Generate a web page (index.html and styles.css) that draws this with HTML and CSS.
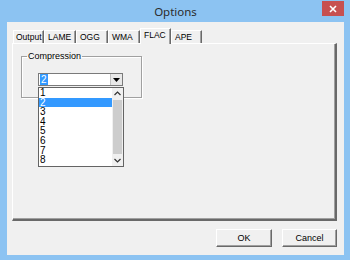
FILE: index.html
```html
<!DOCTYPE html>
<html lang="en">
<head>
  <meta charset="UTF-8" />
  <title>Options</title>
  <link rel="stylesheet" href="styles.css">
</head>
<body>
  <div class="window">
    <div class="titlebar">
      <span></span>
      <span class="title">Options</span>
      <span class="close-btn">
        <svg width="8" height="8" viewBox="0 0 8 8"><path d="M1 1 L7 7 M7 1 L1 7" stroke="#fff" stroke-width="1.6"/></svg>
      </span>
    </div>

    <div class="client">
      <div class="tabs">
        <div class="tab">Output</div>
        <div class="tab">LAME</div>
        <div class="tab">OGG</div>
        <div class="tab">WMA</div>
        <div class="tab active">FLAC</div>
        <div class="tab">APE</div>
      </div>

      <div class="tab-page">
        <fieldset class="group">
          <legend>Compression</legend>
          <div class="combo">
            <div class="combo-field"><span class="sel-text">2</span></div>
            <div class="combo-btn">
              <svg width="7" height="4" viewBox="0 0 7 4"><path d="M0 0 H7 L3.5 4 Z" fill="#000"/></svg>
            </div>

            <div class="droplist">
              <ul class="items">
                <li>1</li>
                <li class="selected">2</li>
                <li>3</li>
                <li>4</li>
                <li>5</li>
                <li>6</li>
                <li>7</li>
                <li>8</li>
              </ul>
              <div class="scrollbar">
                <svg class="arrow" width="7" height="5" viewBox="0 0 7 5"><path d="M0.5 4 L3.5 1 L6.5 4" fill="none" stroke="#333" stroke-width="1.2"/></svg>
                <div class="thumb"></div>
                <svg class="arrow" width="7" height="5" viewBox="0 0 7 5"><path d="M0.5 1 L3.5 4 L6.5 1" fill="none" stroke="#333" stroke-width="1.2"/></svg>
              </div>
            </div>
          </div>
        </fieldset>
      </div>

      <div class="buttons">
        <button class="btn ok-btn">OK</button>
        <button class="btn">Cancel</button>
      </div>
    </div>
  </div>
</body>
</html>
```

FILE: styles.css
```css
body {
  margin: 0;
  padding: 0;
  font-family: "Liberation Sans", Arial, sans-serif;
  font-size: 9px;
  color: #000;
}

.window {
  width: 350px;
  height: 260px;
  box-sizing: border-box;
  background: #8cc3f2;
  padding: 0 6px 5px 7px;
  display: flex;
  flex-direction: column;
}

.titlebar {
  height: 22px;
  display: grid;
  grid-template-columns: 1fr auto 1fr;
  align-items: start;
}

.title {
  font-family: "Noto Sans", sans-serif;
  font-size: 11.5px;
  color: #2b2b2b;
  line-height: 22px;
  margin-top: 1px;
}

.close-btn {
  justify-self: end;
  width: 22px;
  height: 15px;
  margin-top: 1px;
  background: #c75050;
  display: flex;
  align-items: center;
  justify-content: center;
}

.client {
  flex: 1;
  background: #f0f0f0;
  padding: 6px 7px 8px 5px;
  display: flex;
  flex-direction: column;
}

.tabs {
  display: flex;
  align-items: flex-end;
  height: 15px;
  padding-left: 1px;
  position: relative;
  z-index: 1;
}

.tab {
  height: 13px;
  line-height: 13px;
  box-sizing: border-box;
  padding: 0 0 0 3px;
  white-space: nowrap;
  font-size: 8.5px;
  border-top: 1px solid #fff;
  border-left: 1px solid #fff;
  border-right: 1px solid #696969;
  box-shadow: inset -1px 0 #a0a0a0;
}

.tab:nth-child(1) { width: 31px; padding-left: 2px; }
.tab:nth-child(2) { width: 32px; }
.tab:nth-child(3) { width: 32px; }
.tab:nth-child(4) { width: 32px; }
.tab:nth-child(5) { width: 31px; }
.tab:nth-child(6) { width: 31px; }

.tab.active {
  height: 16px;
  line-height: 12px;
  margin-bottom: -1px;
  background: #f0f0f0;
}

.tab-page {
  height: 178px;
  box-sizing: border-box;
  border-top: 1px solid #fff;
  border-left: 1px solid #fff;
  border-right: 2px solid #696969;
  border-bottom: 2px solid #696969;
  box-shadow: inset -1px -1px #a0a0a0;
  padding: 8px 0 0 8px;
}

.group {
  width: 121px;
  height: 46px;
  box-sizing: border-box;
  margin: 0;
  padding: 0 0 0 16px;
  border: 1px solid #a0a0a0;
  box-shadow: inset 1px 1px #fff, 1px 1px #fff;
}

.group legend {
  padding: 0 1px;
  margin-left: -11px;
  line-height: 9px;
}

.combo {
  position: relative;
  width: 85px;
  height: 13px;
  margin-top: 12px;
  box-sizing: border-box;
  border: 1px solid #7a7a7a;
  background: #fff;
  display: flex;
  z-index: 2;
}

.combo-field {
  flex: 1;
  padding: 1px 0 0 1px;
  font-size: 10px;
  line-height: 10px;
}

.sel-text {
  background: #3399ff;
  color: #fff;
  padding: 0 1px;
}

.combo-btn {
  width: 11px;
  display: flex;
  align-items: center;
  justify-content: center;
  background: #e8e8e8;
  border-left: 1px solid #c0c0c0;
}

.droplist {
  position: absolute;
  left: -1px;
  top: 13px;
  width: 86px;
  height: 80px;
  box-sizing: border-box;
  border: 1px solid #646464;
  background: #fff;
  display: flex;
}

.items {
  list-style: none;
  margin: 0;
  padding: 0;
  flex: 1;
}

.items li {
  height: 9.6px;
  line-height: 10px;
  font-size: 10px;
  padding-left: 1px;
  color: #000;
}

.items li.selected {
  background: #3399ff;
  color: #fff;
}

.scrollbar {
  width: 11px;
  background: #f0f0f0;
  display: flex;
  flex-direction: column;
  align-items: center;
}

.scrollbar .arrow {
  margin: 3px 0;
}

.thumb {
  flex: 1;
  width: 9px;
  background: #cdcdcd;
  margin: 1px 0;
}

.buttons {
  display: flex;
  justify-content: flex-end;
  gap: 10px;
  margin-top: 8px;
}

.btn {
  height: 18px;
  box-sizing: border-box;
  font-family: "Liberation Sans", Arial, sans-serif;
  font-size: 9px;
  padding: 0;
  background: #f0f0f0;
  border: 1px solid;
  border-color: #fff #696969 #696969 #fff;
  box-shadow: inset -1px -1px #a0a0a0;
  color: #000;
}

.ok-btn {
  width: 56px;
}

.btn + .btn {
  width: 55px;
}
```
